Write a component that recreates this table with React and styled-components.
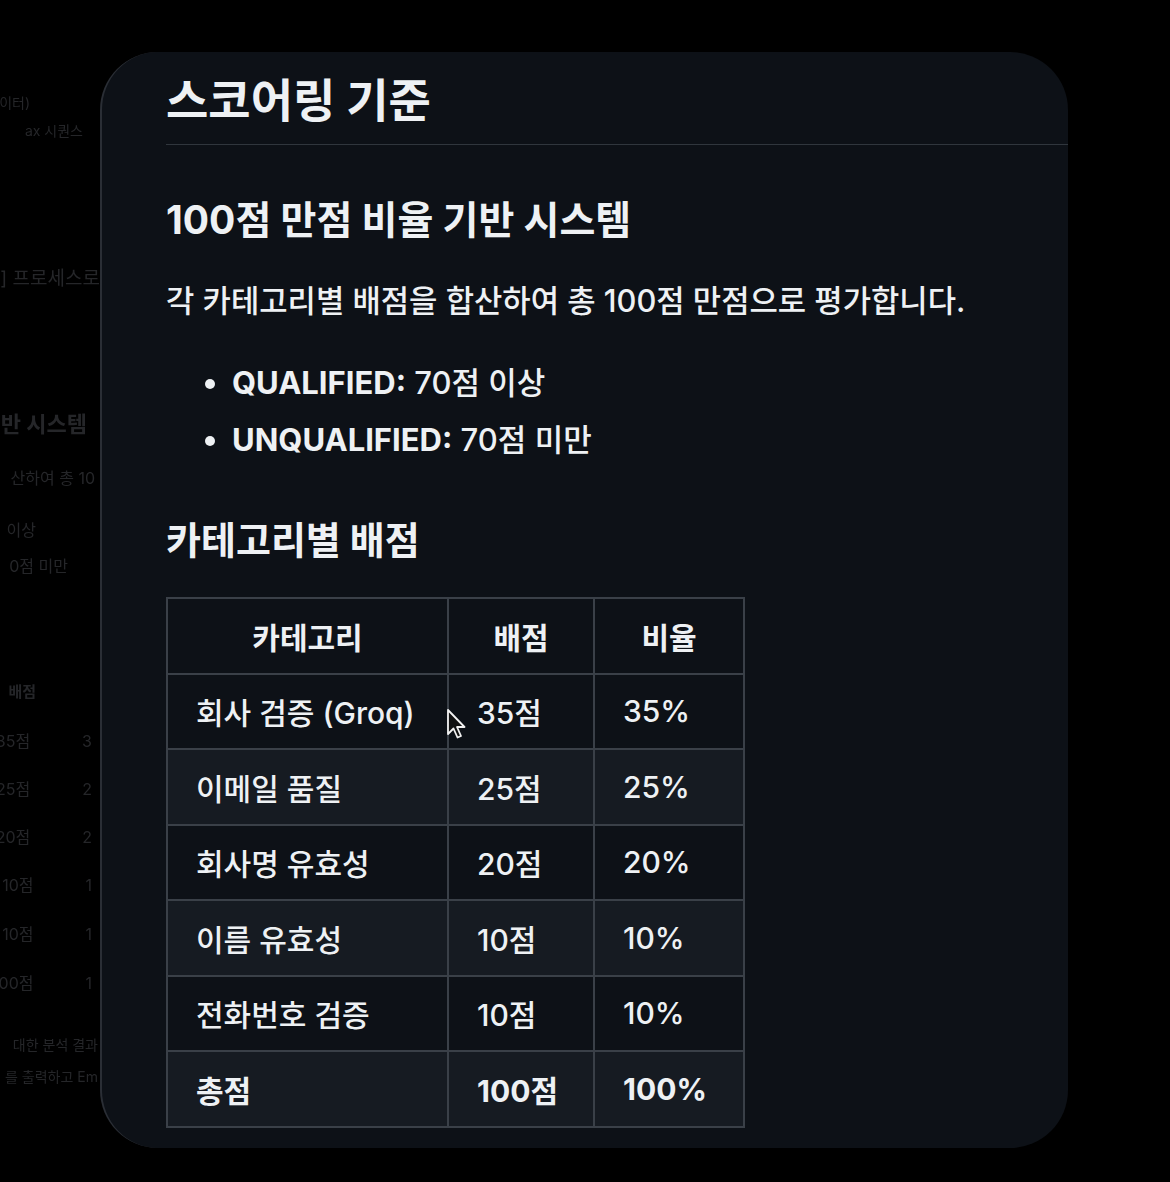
import React from 'react'
import styled, { createGlobalStyle } from 'styled-components'

const GlobalStyle = createGlobalStyle`
	html, body {
		margin: 0;
		padding: 0;
		background: #000;
	}
	body {
		font-family: Inter, "Noto Sans CJK KR", sans-serif;
		color: #eef1f4;
	}
`

const Stage = styled.div`
	display: flex;
	width: 1170px;
	height: 1182px;
	overflow: hidden;
	background: #000;
`

// blurred page that sits behind the zoomed card
const Backdrop = styled.div`
	width: 100px;
	flex-shrink: 0;
	display: flex;
	flex-direction: column;
	overflow: hidden;
	filter: blur(0.7px);
`

const BackLine = styled.div`
	display: flex;
	justify-content: flex-end;
	gap: ${p => p.$split || 0}px;
	margin-top: ${p => p.$gap}px;
	padding-right: ${p => p.$pr}px;
	height: 24px;
	line-height: 24px;
	white-space: nowrap;
	font-size: ${p => p.$size || 15}px;
	font-weight: ${p => p.$bold ? 700 : 400};
	color: #252629;
`

const Card = styled.div`
	position: relative;
	margin-top: 52px;
	width: 968px;
	height: 1096px;
	flex-shrink: 0;
	box-sizing: border-box;
	background: #0d1117;
	border-radius: 58px;
	border-left: 2px solid #2a2e35;
	overflow: hidden;
	padding: 21px 0 0 64px;
`

const Title = styled.h1`
	margin: 0;
	font-size: 46px;
	line-height: 54px;
	font-weight: 700;
	padding-bottom: 17px;
	border-bottom: 1.5px solid #30363d;
`

const Subtitle = styled.h2`
	margin: ${p => p.$top}px 0 0;
	font-size: ${p => p.$size}px;
	line-height: 45px;
	font-weight: 700;
`

const Paragraph = styled.p`
	margin: 37px 0 0;
	font-size: 30.8px;
	line-height: 44px;
	font-weight: 500;
`

const List = styled.ul`
	margin: 31px 0 0;
	padding-left: 66px;
	font-size: 31px;
	line-height: 57px;
	font-weight: 500;

	strong {
		font-weight: 700;
	}
`

const Table = styled.table`
	margin-top: 34px;
	border-collapse: collapse;
	font-size: 30px;
	font-weight: 500;
`

const Row = styled.tr`
	height: 75.5px;
	background: ${p => p.$alt ? '#161b22' : '#0d1117'};
`

const Head = styled.th`
	width: ${p => p.$w}px;
	border: 2px solid #3a4048;
	text-align: center;
	font-weight: 700;
	padding: 0;
`

const Cell = styled.td`
	border: 2px solid #3a4048;
	padding: 0 28px;
	font-weight: ${p => p.$bold ? 700 : 500};
`

const Pointer = styled.svg`
	position: absolute;
	left: 344px;
	top: 656px;
`

const backLines = [
	{ text: '데이터)', gap: 91, pr: 70, size: 14 },
	{ text: 'ax 시퀀스', gap: 4, pr: 17, size: 14 },
	{ text: '] 프로세스로', gap: 124, pr: 0, size: 19 },
	{ text: '반 시스템', gap: 121, pr: 13, size: 22, bold: true },
	{ text: '산하여 총 10', gap: 30, pr: 5, size: 16 },
	{ text: '이상', gap: 28, pr: 64, size: 16 },
	{ text: '0점 미만', gap: 12, pr: 32, size: 16 },
	{ text: '배점', gap: 102, pr: 64, size: 15, bold: true },
	{ text: '35점', tail: '3', gap: 25, pr: 8, size: 16 },
	{ text: '25점', tail: '2', gap: 24, pr: 8, size: 16 },
	{ text: '20점', tail: '2', gap: 24, pr: 8, size: 16 },
	{ text: '10점', tail: '1', gap: 24, pr: 8, size: 16 },
	{ text: '10점', tail: '1', gap: 25, pr: 8, size: 16 },
	{ text: '100점', tail: '1', gap: 25, pr: 8, size: 16 },
	{ text: '대한 분석 결과 ', gap: 38, pr: 2, size: 14 },
	{ text: '를 출력하고 Em', gap: 8, pr: 2, size: 14 }
]

const scores = [
	{ name: '회사 검증 (Groq)', point: '35점', ratio: '35%' },
	{ name: '이메일 품질', point: '25점', ratio: '25%' },
	{ name: '회사명 유효성', point: '20점', ratio: '20%' },
	{ name: '이름 유효성', point: '10점', ratio: '10%' },
	{ name: '전화번호 검증', point: '10점', ratio: '10%' }
]

export default function App() {
	return (
		<Stage>
			<GlobalStyle />
			<Backdrop>
				{backLines.map((line, i) => (
					<BackLine key={i} $gap={line.gap} $pr={line.pr} $size={line.size} $bold={line.bold} $split={line.tail ? 52 : 0}>
						<span>{line.text}</span>
						{line.tail && <span>{line.tail}</span>}
					</BackLine>
				))}
			</Backdrop>

			<Card>
				<Title>스코어링 기준</Title>
				<Subtitle $top={52} $size={39}>100점 만점 비율 기반 시스템</Subtitle>
				<Paragraph>각 카테고리별 배점을 합산하여 총 100점 만점으로 평가합니다.</Paragraph>
				<List>
					<li><strong>QUALIFIED:</strong> 70점 이상</li>
					<li><strong>UNQUALIFIED:</strong> 70점 미만</li>
				</List>
				<Subtitle $top={50} $size={38}>카테고리별 배점</Subtitle>
				<Table>
					<thead>
						<Row>
							<Head $w={279}>카테고리</Head>
							<Head $w={144}>배점</Head>
							<Head $w={148}>비율</Head>
						</Row>
					</thead>
					<tbody>
						{scores.map((s, i) => (
							<Row key={s.name} $alt={i % 2 === 1}>
								<Cell>{s.name}</Cell>
								<Cell>{s.point}</Cell>
								<Cell>{s.ratio}</Cell>
							</Row>
						))}
						<Row $alt>
							<Cell $bold>총점</Cell>
							<Cell $bold>100점</Cell>
							<Cell $bold>100%</Cell>
						</Row>
					</tbody>
				</Table>

				<Pointer width="22" height="32" viewBox="0 0 22 32">
					<path d="M2 2 L2 26 L7.5 20.5 L11.5 29.5 L15 28 L11 19 L18.5 19 Z" fill="#111" stroke="#f2f2f2" strokeWidth="1.8" strokeLinejoin="round" />
				</Pointer>
			</Card>
		</Stage>
	)
}
